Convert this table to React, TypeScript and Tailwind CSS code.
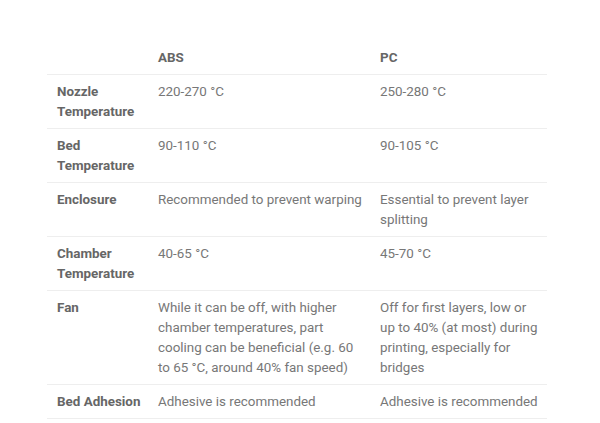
const rows: [string, string, string][] = [
  ["Nozzle Temperature", "220-270 °C", "250-280 °C"],
  ["Bed Temperature", "90-110 °C", "90-105 °C"],
  ["Enclosure", "Recommended to prevent warping", "Essential to prevent layer splitting"],
  ["Chamber Temperature", "40-65 °C", "45-70 °C"],
  [
    "Fan",
    "While it can be off, with higher chamber temperatures, part cooling can be beneficial (e.g. 60 to 65 °C, around 40% fan speed)",
    "Off for first layers, low or up to 40% (at most) during printing, especially for bridges",
  ],
  ["Bed Adhesion", "Adhesive is recommended", "Adhesive is recommended"],
];

export default function App() {
  return (
    <div className="min-h-[423px] bg-white pt-[41px] pl-[47px] font-['Roboto',sans-serif] text-[13.4px] leading-5">
      <table className="w-[500px] table-fixed border-collapse text-left">
        <colgroup>
          <col className="w-[101px]" />
          <col className="w-[222px]" />
          <col />
        </colgroup>
        <thead>
          <tr className="border-b border-[#eeeeee]">
            <th className="pl-2.5 pr-1 py-[6.5px] font-bold"></th>
            <th className="pl-2.5 pr-1 py-[6.5px] font-bold text-[#666666]">ABS</th>
            <th className="pl-2.5 pr-1 py-[6.5px] font-bold text-[#666666]">PC</th>
          </tr>
        </thead>
        <tbody>
          {rows.map(([label, abs, pc]) => (
            <tr key={label} className="border-b border-[#eeeeee] align-top">
              <td className="pl-2.5 pr-1 py-[6.5px] font-bold text-[#666666]">{label}</td>
              <td className="pl-2.5 pr-1 py-[6.5px] text-[#777777]">{abs}</td>
              <td className="pl-2.5 pr-1 py-[6.5px] text-[#777777]">{pc}</td>
            </tr>
          ))}
        </tbody>
      </table>
    </div>
  );
}
